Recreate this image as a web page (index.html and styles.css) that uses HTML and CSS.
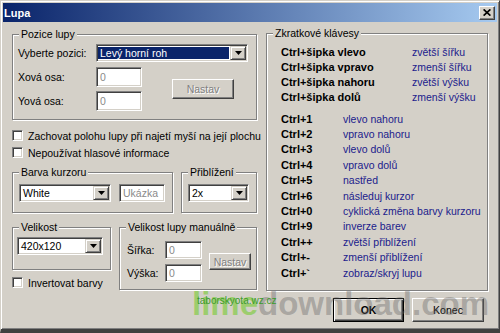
FILE: index.html
```html
<!DOCTYPE html>
<html lang="cs">
<head>
    <meta charset="UTF-8">
    <meta name="viewport" content="width=device-width, initial-scale=1.0">
    <title>Lupa</title>
    <link rel="stylesheet" href="styles.css">
</head>
<body>
    <div class="window">
        <div class="titlebar">
            <span class="title">Lupa</span>
            <span class="close-btn">
                <svg width="8" height="7" viewBox="0 0 8 7"><path d="M0.6 0.4l6.8 6.2M7.4 0.4l-6.8 6.2" stroke="#000" stroke-width="1.7" fill="none"/></svg>
            </span>
        </div>

        <div class="client">
            <div class="col-left">
                <!-- Pozice lupy -->
                <div class="group group-position">
                    <div class="group-title">Pozice lupy</div>
                    <div class="position-body">
                        <div class="field-row">
                            <span class="label-pos">Vyberte pozici:</span>
                            <div class="combo combo-pos">
                                <span class="combo-text selected">Levý horní roh</span>
                                <span class="combo-btn"><svg width="7" height="4" viewBox="0 0 7 4"><path d="M0 0h7L3.5 4z" fill="#000"/></svg></span>
                            </div>
                        </div>
                        <div class="axis">
                            <div class="axis-fields">
                                <div class="field-row">
                                    <span class="label-pos">Xová osa:</span>
                                    <span class="field field-axis">0</span>
                                </div>
                                <div class="field-row">
                                    <span class="label-pos">Yová osa:</span>
                                    <span class="field field-axis">0</span>
                                </div>
                            </div>
                            <span class="btn btn-disabled btn-set">Nastav</span>
                        </div>
                    </div>
                </div>

                <div class="checks">
                    <div class="check-row"><span class="check-box"></span><span>Zachovat polohu lupy při najetí myší na její plochu</span></div>
                    <div class="check-row"><span class="check-box"></span><span>Nepoužívat hlasové informace</span></div>
                </div>

                <div class="pair pair-top">
                    <div class="group group-cursor">
                        <div class="group-title">Barva kurzoru</div>
                        <div class="cursor-body">
                            <div class="combo combo-cursor">
                                <span class="combo-text">White</span>
                                <span class="combo-btn"><svg width="7" height="4" viewBox="0 0 7 4"><path d="M0 0h7L3.5 4z" fill="#000"/></svg></span>
                            </div>
                            <span class="field field-sample">Ukázka</span>
                        </div>
                    </div>
                    <div class="group group-zoom">
                        <div class="group-title">Přiblížení</div>
                        <div class="zoom-body">
                            <div class="combo combo-zoom">
                                <span class="combo-text">2x</span>
                                <span class="combo-btn"><svg width="7" height="4" viewBox="0 0 7 4"><path d="M0 0h7L3.5 4z" fill="#000"/></svg></span>
                            </div>
                        </div>
                    </div>
                </div>

                <div class="pair pair-bottom">
                    <div class="size-col">
                        <div class="group group-size">
                            <div class="group-title">Velikost</div>
                            <div class="size-body">
                                <div class="combo combo-size">
                                    <span class="combo-text">420x120</span>
                                    <span class="combo-btn"><svg width="7" height="4" viewBox="0 0 7 4"><path d="M0 0h7L3.5 4z" fill="#000"/></svg></span>
                                </div>
                            </div>
                        </div>
                        <div class="check-row check-invert"><span class="check-box"></span><span>Invertovat barvy</span></div>
                    </div>
                    <div class="group group-manual">
                        <div class="group-title">Velikost lupy manuálně</div>
                        <div class="manual-body">
                            <div class="manual-fields">
                                <div class="field-row">
                                    <span class="label-manual">Šířka:</span>
                                    <span class="field field-manual">0</span>
                                </div>
                                <div class="field-row">
                                    <span class="label-manual">Výška:</span>
                                    <span class="field field-manual">0</span>
                                </div>
                            </div>
                            <span class="btn btn-disabled btn-set-small">Nastav</span>
                        </div>
                    </div>
                </div>
            </div>

            <div class="col-right">
                <div class="group group-keys">
                    <div class="group-title">Zkratkové klávesy</div>
                    <div class="keys-body">
                        <div class="keys keys-arrows">
                            <span class="key">Ctrl+šipka vlevo</span><span class="action">zvětší šířku</span>
                            <span class="key">Ctrl+šipka vpravo</span><span class="action">zmenší šířku</span>
                            <span class="key">Ctrl+šipka nahoru</span><span class="action">zvětší výšku</span>
                            <span class="key">Ctrl+šipka dolů</span><span class="action">zmenší výšku</span>
                        </div>
                        <div class="keys keys-numbers">
                            <span class="key">Ctrl+1</span><span class="action">vlevo nahoru</span>
                            <span class="key">Ctrl+2</span><span class="action">vpravo nahoru</span>
                            <span class="key">Ctrl+3</span><span class="action">vlevo dolů</span>
                            <span class="key">Ctrl+4</span><span class="action">vpravo dolů</span>
                            <span class="key">Ctrl+5</span><span class="action">nastřed</span>
                            <span class="key">Ctrl+6</span><span class="action">následuj kurzor</span>
                            <span class="key">Ctrl+0</span><span class="action">cyklická změna barvy kurzoru</span>
                            <span class="key">Ctrl+9</span><span class="action">inverze barev</span>
                            <span class="key">Ctrl++</span><span class="action">zvětší přiblížení</span>
                            <span class="key">Ctrl+-</span><span class="action">zmenší přiblížení</span>
                            <span class="key">Ctrl+`</span><span class="action">zobraz/skryj lupu</span>
                        </div>
                    </div>
                </div>
                <div class="actions">
                    <span class="btn btn-default btn-ok">OK</span>
                    <span class="btn btn-end">Konec</span>
                </div>
            </div>
        </div>

        <!-- watermark over the dialog -->
        <div class="watermark"><span class="wm-lime">lime</span><span class="wm-rest">download.com</span></div>
        <div class="wm-site">taborskyota.wz.cz</div>
    </div>
</body>
</html>
```

FILE: styles.css
```css
* {
    box-sizing: border-box;
}

body {
    margin: 0;
    background-color: #d4d0c8;
    font-family: "Liberation Sans", Arial, sans-serif;
    font-size: 10.5px;
    color: #000;
}

.window {
    position: relative;
    width: 500px;
    height: 333px;
    padding: 2px;
    overflow: hidden;
    background-color: #d4d0c8;
    border: 1px solid;
    border-bottom-width: 4px;
    border-color: #d4d0c8 #404040 #404040 #d4d0c8;
    box-shadow: inset 1px 1px #fff, inset -1px -1px #808080;
}

/* title bar */
.titlebar {
    display: flex;
    align-items: center;
    justify-content: space-between;
    height: 19px;
    padding: 0 2px 0 1px;
    background: linear-gradient(to right, #0a246a, #a6caf0);
}

.title {
    color: #fff;
    font-weight: bold;
    font-size: 11px;
}

.close-btn {
    display: flex;
    align-items: center;
    justify-content: center;
    width: 16px;
    height: 14px;
    background-color: #d4d0c8;
    border: 1px solid;
    border-color: #fff #404040 #404040 #fff;
    box-shadow: inset -1px -1px #808080;
}

/* layout */
.client {
    display: flex;
    gap: 9px;
    padding: 12px 0 0 9px;
}

.col-left {
    width: 245px;
}

.col-right {
    width: 222px;
    margin-top: -1px;
}

/* group boxes */
.group {
    border: 1px solid #808080;
    box-shadow: 1px 1px #fff, inset 1px 1px #fff;
}

.group-title {
    width: max-content;
    margin: -7px 0 0 6px;
    padding: 0 2px;
    line-height: 12px;
    background-color: #d4d0c8;
}

.field-row {
    display: flex;
    align-items: center;
}

/* controls */
.combo {
    display: flex;
    height: 18px;
    padding: 1px;
    background-color: #fff;
    border: 1px solid;
    border-color: #808080 #fff #fff #808080;
    box-shadow: inset 1px 1px #404040, inset -1px -1px #d4d0c8;
}

.combo-text {
    flex: 1;
    padding-left: 2px;
    line-height: 14px;
    white-space: nowrap;
}

.combo-text.selected {
    margin: 1px 1px 1px 0;
    padding-left: 2px;
    line-height: 12px;
    background-color: #0a246a;
    color: #fff;
}

.combo-btn {
    display: flex;
    align-items: center;
    justify-content: center;
    width: 16px;
    height: 14px;
    background-color: #d4d0c8;
    border: 1px solid;
    border-color: #d4d0c8 #404040 #404040 #d4d0c8;
    box-shadow: inset 1px 1px #fff, inset -1px -1px #808080;
}

.field {
    display: flex;
    align-items: center;
    padding-left: 3px;
    background-color: #fff;
    color: #8a8a8a;
    border: 1px solid;
    border-color: #808080 #fff #fff #808080;
    box-shadow: inset 1px 1px #404040, inset -1px -1px #d4d0c8;
}

.btn {
    display: flex;
    align-items: center;
    justify-content: center;
    background-color: #d4d0c8;
    border: 1px solid;
    border-color: #fff #404040 #404040 #fff;
    box-shadow: inset -1px -1px #808080;
}

.btn-disabled {
    color: #808080;
    text-shadow: 1px 1px #fff;
}

.btn-default {
    border-color: #000;
    font-weight: bold;
    box-shadow: inset 1px 1px #fff, inset -1px -1px #404040, inset -2px -2px #808080;
}

.check-row {
    display: flex;
    align-items: center;
    gap: 5px;
    height: 17px;
    white-space: nowrap;
}

.check-box {
    width: 11px;
    height: 11px;
    flex-shrink: 0;
    background-color: #fff;
    border: 1px solid;
    border-color: #808080 #fff #fff #808080;
    box-shadow: inset 1px 1px #404040, inset -1px -1px #d4d0c8;
}

/* Pozice lupy */
.group-position {
    height: 86px;
}

.position-body {
    padding: 4px 0 0 5px;
}

.label-pos {
    width: 78px;
}

.combo-pos {
    width: 152px;
}

.axis {
    display: flex;
    align-items: center;
    margin-top: 5px;
}

.axis-fields {
    display: flex;
    flex-direction: column;
    gap: 4px;
}

.field-axis {
    width: 46px;
    height: 20px;
}

.btn-set {
    width: 62px;
    height: 20px;
    margin-left: 30px;
}

.checks {
    margin-top: 7px;
}

/* pairs of groups */
.pair {
    display: flex;
    align-items: flex-start;
    gap: 8px;
}

.pair-top {
    margin-top: 11px;
}

.group-cursor {
    width: 161px;
    height: 41px;
}

.cursor-body {
    display: flex;
    gap: 8px;
    padding: 6px 0 0 6px;
}

.combo-cursor {
    width: 92px;
}

.field-sample {
    width: 46px;
    height: 18px;
}

.group-zoom {
    width: 76px;
    height: 41px;
}

.zoom-body {
    padding: 6px 0 0 6px;
}

.combo-zoom {
    width: 61px;
}

.pair-bottom {
    margin-top: 14px;
}

.group-size {
    width: 99px;
    height: 43px;
}

.size-body {
    padding: 4px 0 0 4px;
}

.combo-size {
    width: 86px;
}

.check-invert {
    margin-top: 4px;
}

.group-manual {
    width: 139px;
    height: 63px;
}

.manual-body {
    display: flex;
    align-items: center;
    padding: 8px 0 0 7px;
}

.manual-fields {
    display: flex;
    flex-direction: column;
    gap: 5px;
}

.label-manual {
    width: 38px;
}

.field-manual {
    width: 37px;
    height: 18px;
}

.btn-set-small {
    width: 42px;
    height: 17px;
    margin-left: 7px;
}

/* Zkratkové klávesy */
.group-keys {
    height: 258px;
}

.keys-body {
    padding-left: 14px;
}

.keys {
    display: grid;
    align-items: center;
    white-space: nowrap;
}

.keys-arrows {
    grid-template-columns: 131px auto;
    grid-auto-rows: 15px;
    margin-top: 5px;
}

.keys-numbers {
    grid-template-columns: 62px auto;
    grid-auto-rows: 15.4px;
    margin-top: 7px;
}

.key {
    font-weight: bold;
    font-size: 11px;
}

.action {
    color: #1b1b8c;
}

.actions {
    display: flex;
    justify-content: flex-end;
    gap: 8px;
    margin-top: 7px;
    padding-right: 4px;
}

.btn-ok {
    width: 71px;
    height: 24px;
}

.btn-end {
    width: 72px;
    height: 24px;
}

/* watermark */
.watermark {
    position: absolute;
    left: 191px;
    top: 286px;
    font-size: 33px;
    font-weight: bold;
    line-height: 33px;
    white-space: nowrap;
    pointer-events: none;
}

.wm-lime {
    color: rgba(119, 203, 50, 0.6);
}

.wm-rest {
    color: rgba(100, 100, 100, 0.4);
}

.wm-site {
    position: absolute;
    left: 196px;
    top: 294px;
    font-size: 10px;
    line-height: 12px;
    color: #3a9a2a;
    pointer-events: none;
}
```
